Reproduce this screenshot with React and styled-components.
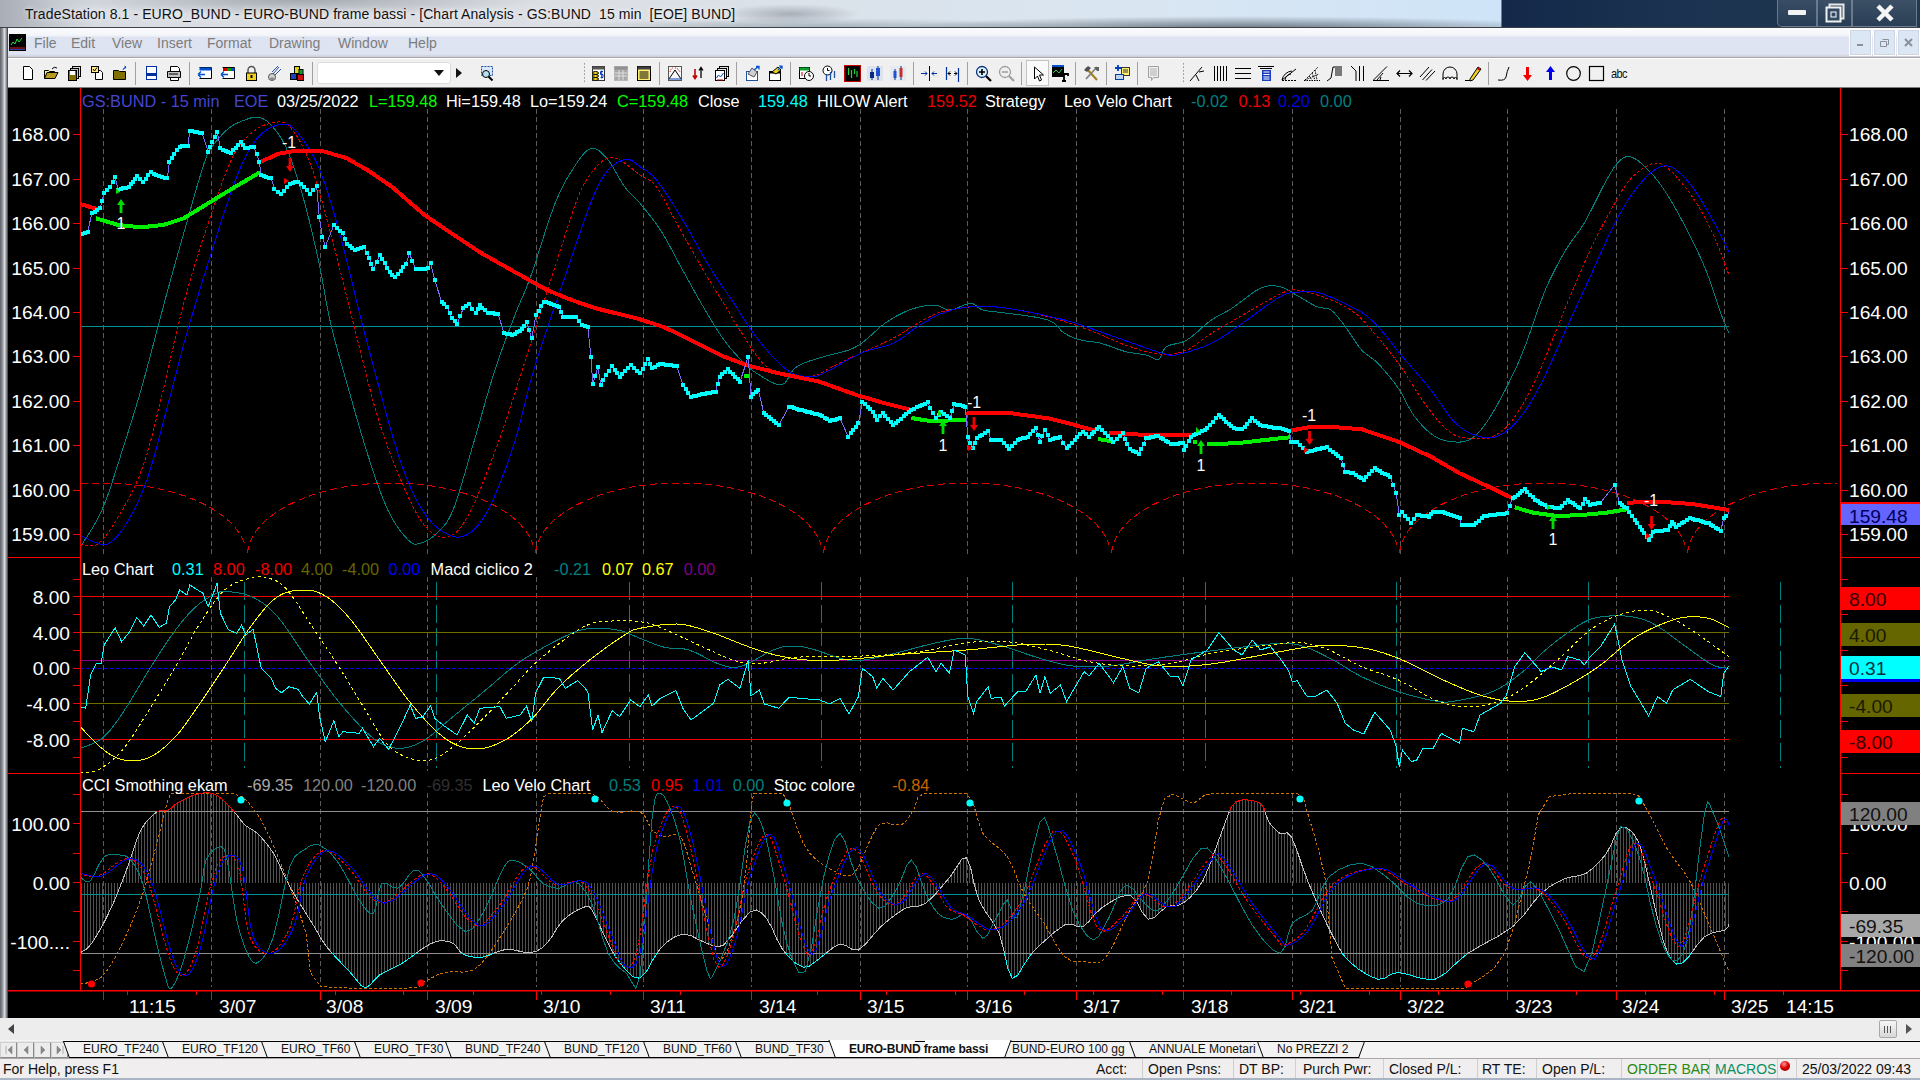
import React from 'react';
import styled, { createGlobalStyle } from 'styled-components';

const Global = createGlobalStyle`
  html, body { margin: 0; padding: 0; width: 1920px; height: 1080px; overflow: hidden; background: #f0f0f0; }
  #root { width: 1920px; height: 1080px; }
  * { box-sizing: border-box; }
`;
const SANS = `"Liberation Sans", Arial, sans-serif`;

/* ---------- window chrome ---------- */
const Screen = styled.div`display:flex;flex-direction:column;width:1920px;height:1080px;font-family:${SANS};`;
const TitleBar = styled.div`
  height:28px;display:flex;align-items:flex-start;padding-left:25px;
  border-bottom:1px solid #3c4248;
  background:
    linear-gradient(90deg,transparent 78.15%,#14294a 78.25%,#1b3350 88%,#22384f 100%),
    radial-gradient(ellipse 360px 14px at 1240px 30px,rgba(60,70,80,.8),transparent),
    radial-gradient(ellipse 260px 10px at 820px 28px,rgba(90,110,120,.45),transparent),
    radial-gradient(ellipse 70px 10px at 790px 14px,rgba(120,125,135,.5),transparent),
    radial-gradient(ellipse 240px 16px at 300px 0px,rgba(110,115,125,.5),transparent),
    linear-gradient(90deg,#a8adb6 0,#d9dde3 5%,#dcdfe4 30%,#d9e6f2 60%,#cfe4f8 78%);
`;
const TitleText = styled.div`
  flex:1;font-size:14px;line-height:29px;color:#111;white-space:pre;letter-spacing:.09px;
  text-shadow:0 0 5px rgba(255,255,255,.9);
`;
const WinControls = styled.div`display:flex;height:27px;margin-right:3px;`;
const WinBtn = styled.div`
  width:${p=>p.$w}px;height:27px;display:flex;align-items:center;justify-content:center;
  border:1px solid rgba(150,165,180,.55);border-top:none;background:linear-gradient(180deg,rgba(255,255,255,.12),rgba(255,255,255,.04));
  &:first-child{border-bottom-left-radius:5px;}
`;
const Middle = styled.div`flex:1;display:flex;min-height:0;height:990px;`;
const LeftFrame = styled.div`width:8px;background:linear-gradient(90deg,#5c6066,#9a9ea4 35%,#dcdfe2 55%,#8c9096 80%,#33363a);`;
const MainCol = styled.div`width:1912px;display:flex;flex-direction:column;`;

const MenuBar = styled.div`
  height:30px;display:flex;align-items:center;position:relative;padding-left:1px;
  background:linear-gradient(180deg,#fbfbfd 0,#f4f5fa 25%,#dee3f1 32%,#dfe4f2 90%,#c9ccd4 100%);
  border-bottom:1px solid #a8a8a8;
`;
const MenuLogo = styled.svg`width:17px;height:17px;margin-right:8px;display:block;`;
const MenuItem = styled.span`width:${p=>p.$w}px;font-size:14px;color:#7c7c7c;`;
const MdiBtns = styled.div`margin-left:auto;display:flex;gap:1px;height:27px;`;
const MdiBtn = styled.div`
  width:${p=>p.$w}px;display:flex;align-items:center;justify-content:center;color:#8a8f98;
  background:#dbe7f5;border:1px solid #fff;outline:1px solid #cfd6e2;outline-offset:-2px;
`;

const ToolBar = styled.div`
  height:30px;display:flex;align-items:center;background:#f0f0f0;border-bottom:1px solid #7d7d7d;border-top:1px solid #fff;
`;
const ToolSection = styled.div`display:flex;align-items:center;height:100%;margin-left:${p=>p.$ml}px;`;
const ToolBtn = styled.div`
  width:23px;height:26px;display:flex;align-items:center;justify-content:center;flex:none;
  ${p=>p.$on&&`background:#fafafa;outline:1px solid #c4c4c4;outline-offset:-1px;`}
`;
const ToolIcon = styled.svg`width:17px;height:17px;display:block;`;
const ToolSep = styled.div`width:8px;height:23px;display:flex;justify-content:center;flex:none;&::after{content:"";width:1px;background:#a0a0a0;}`;
const Grip = styled.div`width:5px;height:22px;flex:none;background:radial-gradient(circle,#999 .8px,transparent 1px) 0 0/5px 3.5px;`;
const Combo = styled.div`
  width:134px;height:22px;background:#fff;border:1px solid #dcdcdc;border-radius:3px;
  display:flex;align-items:center;justify-content:flex-end;padding-right:6px;
`;
const TinyArrow = styled.svg`display:block;flex:none;margin:${p=>p.$m||'0'};`;
const AbcLabel = styled.span`font-size:11px;color:#111;letter-spacing:-.6px;transform:scaleY(1.2);`;

/* ---------- chart ---------- */
const ChartArea = styled.div`width:1912px;height:930px;background:#000;display:flex;flex-direction:column;`;
const Pane = styled.div`position:relative;height:${p=>p.$h}px;flex:none;`;
const PaneSvg = styled.svg`display:block;width:1912px;height:100%;`;
const Legend = styled.div`
  position:absolute;top:${p=>p.$top}px;left:74px;display:flex;height:18px;align-items:center;white-space:pre;font-size:16.3px;
`;
const LegendItem = styled.span`width:${p=>p.$w}px;flex:none;color:${p=>p.$c};`;
const AxisText = styled.text`font-family:${SANS};font-size:19.2px;fill:${p=>p.$c||'#fff'};`;
const MarkText = styled.text`font-family:${SANS};font-size:16px;fill:#fff;text-anchor:middle;`;

/* ---------- bottom ---------- */
const HScroll = styled.div`
  height:22px;background:#ededed;display:flex;align-items:center;justify-content:space-between;padding:0 8px 0 8px;flex:none;
`;
const Thumb = styled.div`
  width:18px;height:18px;margin-left:auto;margin-right:9px;border:1px solid #a8a8a8;border-radius:2px;
  background:linear-gradient(180deg,#f6f6f6,#d8d8d8);display:flex;align-items:center;justify-content:center;gap:1px;
  & i{display:block;width:1px;height:7px;background:#555;margin:0 1px 0 0;}
`;
const TabBar = styled.div`
  height:18px;flex:none;display:flex;background:#f4f4f4;position:relative;padding-top:1px;
  &::before{content:"";position:absolute;left:0;right:0;top:1px;height:1px;background:#000;}
`;
const TabNav = styled.div`width:69px;height:17px;display:flex;flex:none;position:relative;z-index:1;background:#e6e6e6;`;
const TabNavBtn = styled.div`
  width:17px;height:16px;margin-top:1px;border:1px solid #cfcfcf;border-right-color:#8a8a8a;border-bottom-color:#8a8a8a;
  display:flex;align-items:center;justify-content:center;background:#ececec;
`;
const Tab = styled.div`
  position:relative;height:17px;width:${p=>p.$w+6}px;margin-right:-6px;padding-left:14px;flex:none;
  font-size:12px;line-height:17px;white-space:pre;color:#111;z-index:${p=>p.$on?5:1};
  font-weight:${p=>p.$on?700:400};
  ${p=>p.$on&&`letter-spacing:-.2px;margin-top:-1px;height:18px;line-height:19px;`}
  & > span{position:relative;z-index:2;}
  &::before,&::after{
    content:"";position:absolute;top:0;bottom:0;width:50%;z-index:0;background:${p=>p.$on?'#fff':'#f2f2f2'};
    border-top:${p=>p.$on?'0':'1px solid #000'};border-bottom:1px solid #000;transform-origin:bottom;
  }
  &::before{left:0;border-left:1px solid #000;transform:skewX(20deg);}
  &::after{right:0;border-right:1px solid #000;transform:skewX(-20deg);}
`;
const StatusBar = styled.div`
  height:22px;flex:none;display:flex;align-items:center;background:#f0eeee;border-top:1px solid #a8a8a8;border-bottom:2px solid #a9b4c4;
  font-size:14px;color:#111;white-space:pre;
`;
const StatusHelp = styled.div`flex:1;padding-left:3px;`;
const StatusCell = styled.div`
  width:${p=>p.$w}px;flex:none;height:100%;display:flex;align-items:center;padding-left:${p=>p.$pl||5}px;
  border-right:1px solid #cfcfcf;color:${p=>p.$c||'#111'};
  &:last-child{border-right:none;}
`;
const Ball = styled.span`
  display:block;width:10px;height:10px;border-radius:50%;margin:-6px 0 0 -2px;
  background:radial-gradient(circle at 40% 30%,#ff9a9a,#e00000 45%,#700000);
`;

/* ---------- data helpers ---------- */
const joinPanels = (y0, a, b, c) => {
  const out = [];
  [[0,a],[640,b],[1280,c]].forEach(([x0,list]) => list.forEach(([X,Y]) => {
    const x = x0 + X/2.45, y = y0 + Y/3;
    if (out.length && x - out[out.length-1][0] < .6) return;
    out.push([x,y]);
  }));
  return out;
};
const seg = (y0, x0, list) => list.map(([X,Y]) => [x0 + X/2.45, y0 + Y/3]);
const lin = pts => pts.map(p => p[0].toFixed(1)+','+p[1].toFixed(1)).join(' ');
const smooth = (pts, n=5) => {
  const r = [];
  for (let i=0;i<pts.length-1;i++){
    const p0=pts[Math.max(i-1,0)],p1=pts[i],p2=pts[i+1],p3=pts[Math.min(i+2,pts.length-1)];
    for(let k=0;k<n;k++){
      const t=k/n,t2=t*t,t3=t2*t;
      r.push([.5*(2*p1[0]+(p2[0]-p0[0])*t+(2*p0[0]-5*p1[0]+4*p2[0]-p3[0])*t2+(3*p1[0]-p0[0]-3*p2[0]+p3[0])*t3),
              .5*(2*p1[1]+(p2[1]-p0[1])*t+(2*p0[1]-5*p1[1]+4*p2[1]-p3[1])*t2+(3*p1[1]-p0[1]-3*p2[1]+p3[1])*t3)]);
    }
  }
  r.push(pts[pts.length-1]);
  return r;
};
const at = (pts,x) => {
  for(let i=0;i<pts.length-1;i++) if(x>=pts[i][0]&&x<=pts[i+1][0]){
    const d=pts[i+1][0]-pts[i][0]||1; return pts[i][1]+(pts[i+1][1]-pts[i][1])*(x-pts[i][0])/d;
  }
  return null;
};
const blockPath = pts => {
  let d='';
  for(let i=0;i<pts.length-1;i++){
    const [a,b]=[pts[i],pts[i+1]];
    if(Math.abs(b[1]-a[1])>17) { d+=`M${Math.round(a[0])-2} ${Math.round(a[1])-2}h4v4h-4z`; continue; }
    const steps=Math.max(1,Math.round((b[0]-a[0])/2.7));
    for(let k=0;k<steps;k++){
      const t=k/steps,x=a[0]+(b[0]-a[0])*t,y=a[1]+(b[1]-a[1])*t;
      d+=`M${Math.round(x)-2} ${Math.round(y)-2}h4v4h-4z`;
    }
  }
  return d;
};

/* top pane */
const tTeal=smooth(joinPanels(90,
 [[197,1370],[250,1260],[300,1080],[350,880],[400,650],[450,430],[500,220],[520,170],[560,115],[600,90],[630,82],[660,100],[700,170],[740,310],[780,510],[810,700],[850,880],[900,1090],[950,1260],[1000,1350],[1030,1360],[1070,1330],[1110,1260],[1160,1060],[1210,850],[1260,680],[1300,560],[1360,340],[1410,225],[1450,175],[1490,210],[1530,290],[1568,340]],
 [[0,335],[50,420],[100,530],[150,640],[200,740],[240,800],[280,845],[345,885],[375,840],[400,820],[450,800],[530,770],[600,700],[660,660],[720,645],[760,660],[810,640],[840,660],[900,670],[1000,690],[1040,730],[1080,750],[1130,760],[1190,785],[1240,795],[1270,808],[1290,770],[1340,750],[1400,690],[1450,655],[1520,595],[1568,590]],
 [[0,600],[40,615],[90,650],[125,660],[160,710],[200,780],[240,820],[290,895],[330,980],[380,1040],[430,1056],[470,1045],[510,990],[560,880],[600,770],[650,600],[700,480],[745,400],[800,270],[830,215],[855,200],[885,220],[930,280],[980,380],[1040,530],[1080,670],[1100,730]]));
const tRed=smooth(joinPanels(90,
 [[197,1362],[240,1362],[290,1280],[350,1130],[400,900],[450,640],[510,400],[570,200],[620,125],[670,98],[710,110],[760,220],[810,430],[870,720],[930,1000],[1000,1220],[1050,1320],[1100,1340],[1150,1270],[1220,1060],[1290,800],[1360,530],[1420,310],[1470,220],[1510,205],[1568,255]],
 [[0,250],[40,290],[90,400],[150,530],[200,630],[260,750],[310,830],[370,855],[420,860],[480,825],[540,790],[620,745],[680,700],[740,665],[820,650],[900,655],[1000,680],[1100,720],[1200,770],[1280,793],[1340,780],[1400,730],[1470,680],[1568,612]],
 [[0,610],[40,600],[90,615],[160,650],[210,700],[290,820],[360,950],[420,1030],[470,1045],[520,1040],[570,990],[630,860],[690,680],[760,480],[820,340],[860,265],[910,222],[950,235],[1010,320],[1060,430],[1100,555]]));
const tBlue=smooth(joinPanels(90,
 [[197,1335],[240,1360],[270,1358],[310,1300],[360,1170],[410,950],[460,720],[520,480],[580,260],[630,145],[690,102],[730,130],[780,230],[830,420],[900,760],[980,1110],[1040,1270],[1100,1335],[1150,1330],[1200,1250],[1260,1060],[1310,830],[1390,540],[1450,330],[1490,240],[1535,208],[1568,230]],
 [[0,225],[40,270],[100,380],[170,530],[230,640],[290,750],[360,840],[410,860],[450,850],[540,790],[620,760],[680,710],[740,670],[810,650],[900,655],[1040,690],[1150,735],[1280,790],[1320,793],[1400,760],[1470,705],[1568,620]],
 [[0,625],[50,606],[100,610],[190,660],[240,710],[300,800],[370,900],[430,1000],[490,1040],[540,1035],[590,980],[640,880],[700,720],[760,560],[820,400],[870,300],[920,238],[960,232],[1010,290],[1060,390],[1100,485]]));
const thickRed=[
 seg(90,0,[[197,342],[240,358]]),
 [...seg(90,0,[[640,215],[680,192],[720,183],[790,183],[850,205],[900,240],[960,290],[1040,375],[1100,425],[1180,490],[1260,545],[1340,600],[1400,630],[1460,655],[1568,688]]),
  ...seg(90,640,[[60,712],[140,760],[200,797],[260,825],[340,850],[440,875],[530,915],[600,940],[660,958]])],
 seg(90,640,[[800,968],[910,970],[1000,985],[1050,1000],[1115,1022]]),
 seg(90,640,[[1150,1028],[1240,1035],[1355,1035]]),
 seg(90,1280,[[25,1022],[70,1012],[120,1010],[200,1018],[290,1055],[370,1100],[440,1150],[520,1195],[575,1228]]),
 seg(90,1280,[[850,1238],[930,1235],[1010,1242],[1100,1260]]),
];
const thickGreen=[
 seg(90,0,[[235,385],[290,405],[345,412],[400,405],[450,385],[510,340],[570,295],[637,247]]),
 seg(90,640,[[255,858],[268,858]]),
 seg(90,640,[[665,984],[710,993],[800,990]]),
 seg(90,640,[[1122,1047],[1165,1056]]),
 seg(90,640,[[1355,1055],[1365,1055]]),
 [...seg(90,640,[[1390,1062],[1460,1060],[1568,1045]]),...seg(90,1280,[[25,1042]])],
 seg(90,1280,[[575,1252],[620,1268],[680,1278],[740,1275],[800,1268],[850,1258]]),
];
const price=joinPanels(90,
 [[200,432],[215,425],[225,370],[245,355],[255,310],[270,290],[282,262],[290,300],[315,290],[325,275],[335,257],[350,275],[370,247],[390,258],[410,265],[415,215],[440,170],[460,168],[465,122],[495,130],[510,185],[520,155],[532,125],[540,175],[565,190],[590,155],[600,175],[622,170],[635,215],[640,255],[665,265],[672,298],[688,312],[710,282],[730,275],[745,290],[760,312],[776,288],[782,380],[790,440],[797,470],[818,405],[840,430],[850,462],[870,480],[892,470],[905,505],[915,538],[930,495],[955,545],[968,562],[995,522],[1003,490],[1018,538],[1048,535],[1055,518],[1065,570],[1082,635],[1095,650],[1108,685],[1120,703],[1135,655],[1150,642],[1165,670],[1175,645],[1195,668],[1220,672],[1235,730],[1255,735],[1280,718],[1290,695],[1303,745],[1313,675],[1332,635],[1370,650],[1380,680],[1410,680],[1425,705],[1440,712],[1448,800],[1452,882],[1465,832],[1472,885],[1485,855],[1500,828],[1518,860],[1545,825],[1568,850]],
 [[0,840],[20,808],[30,835],[50,822],[90,828],[105,885],[125,920],[185,905],[195,860],[215,838],[245,875],[265,800],[272,920],[290,900],[303,968],[340,1005],[365,950],[410,965],[440,975],[465,992],[490,985],[510,1040],[535,1000],[545,935],[570,965],[580,990],[595,968],[620,1005],[665,960],[705,937],[725,985],[738,965],[760,985],[770,942],[797,950],[803,1040],[815,1075],[825,1045],[853,1022],[860,1050],[885,1050],[905,1078],[925,1050],[950,1040],[970,1015],[980,1055],[992,1020],[1005,1050],[1030,1040],[1045,1075],[1085,1025],[1100,1040],[1125,1010],[1160,1055],[1183,1030],[1200,1078],[1222,1092],[1240,1045],[1270,1038],[1300,1062],[1330,1060],[1332,1080],[1350,1040],[1390,1015],[1418,975],[1455,1015],[1475,1018],[1500,985],[1520,1005],[1560,1015]],
 [[0,1015],[22,1022],[28,1055],[42,1055],[65,1085],[85,1080],[115,1072],[150,1105],[160,1145],[180,1150],[205,1170],[232,1135],[270,1160],[285,1210],[292,1275],[300,1265],[322,1300],[335,1275],[365,1280],[375,1265],[405,1268],[440,1285],[445,1305],[475,1305],[500,1278],[555,1270],[570,1225],[600,1198],[625,1230],[655,1250],[685,1255],[705,1230],[735,1255],[748,1228],[760,1245],[785,1238],[820,1185],[832,1240],[850,1255],[875,1300],[905,1350],[915,1325],[950,1320],[960,1295],[970,1310],[1005,1285],[1050,1300],[1080,1322],[1087,1285],[1100,1268]]);

/* middle pane */
const mCyan=joinPanels(560,
 [[197,440],[210,445],[222,345],[235,312],[248,310],[255,255],[282,203],[298,245],[318,215],[335,172],[352,198],[370,165],[390,202],[408,190],[415,140],[430,120],[440,90],[458,105],[465,75],[497,100],[510,140],[532,70],[540,160],[560,210],[580,220],[592,195],[602,225],[620,208],[640,325],[665,355],[675,385],[690,398],[708,380],[730,388],[742,410],[758,432],[776,397],[783,470],[797,545],[818,482],[830,530],[840,515],[880,520],[888,505],[915,560],[930,535],[952,568],[985,490],[1005,435],[1018,475],[1035,472],[1055,437],[1065,475],[1085,495],[1120,525],[1145,465],[1162,490],[1175,445],[1225,440],[1240,475],[1275,465],[1290,438],[1303,485],[1312,400],[1332,352],[1370,355],[1385,385],[1415,362],[1430,380],[1440,395],[1452,510],[1465,465],[1475,518],[1500,452],[1518,470],[1545,420],[1568,440]],
 [[0,440],[20,405],[30,438],[50,415],[88,392],[105,445],[125,480],[180,430],[195,375],[215,358],[245,385],[265,300],[272,408],[292,390],[305,432],[340,445],[365,412],[440,420],[465,432],[490,415],[512,462],[535,410],[545,325],[570,350],[580,385],[595,355],[620,390],[660,335],[705,292],[725,335],[738,310],[758,340],[770,270],[797,285],[803,410],[817,460],[825,425],[853,380],[860,415],[885,412],[893,438],[925,395],[945,395],[970,345],[980,400],[992,350],[1005,400],[1030,375],[1045,425],[1088,335],[1100,348],[1125,310],[1160,368],[1183,320],[1200,385],[1222,398],[1240,325],[1270,305],[1300,350],[1318,348],[1330,378],[1350,300],[1390,270],[1418,218],[1455,270],[1475,285],[1500,240],[1520,270],[1545,260],[1568,295]],
 [[0,295],[20,330],[30,365],[42,362],[65,408],[85,410],[115,390],[140,430],[160,490],[180,510],[205,522],[232,457],[270,510],[285,560],[292,620],[300,570],[322,605],[335,600],[350,565],[375,565],[395,520],[440,550],[447,505],[475,515],[490,465],[540,430],[555,405],[575,320],[600,278],[640,335],[665,320],[690,330],[705,290],[735,300],[745,315],[760,290],[785,260],[820,192],[838,300],[860,380],[885,430],[903,468],[925,410],[947,430],[962,390],[1005,358],[1050,395],[1080,410],[1087,340],[1100,318]]);
const mTeal=smooth(joinPanels(560,
 [[197,565],[250,535],[300,460],[370,320],[430,210],[480,140],[530,100],[560,95],[620,112],[680,170],[760,310],[840,440],[920,540],[980,565],[1040,540],[1100,480],[1190,390],[1280,300],[1400,220],[1460,205],[1520,212],[1568,235]],
 [[0,238],[60,262],[120,270],[200,315],[250,318],[330,268],[380,258],[430,270],[500,298],[550,300],[640,275],[720,250],[800,235],[880,255],[980,295],[1060,318],[1150,318],[1250,298],[1340,282],[1450,265],[1568,250]],
 [[0,250],[60,260],[130,300],[200,350],[290,395],[380,423],[430,423],[520,395],[590,340],[660,260],[740,190],[790,170],[860,170],[920,195],[1000,265],[1060,315],[1100,325]]));
const mDot=smooth(joinPanels(560,
 [[197,637],[240,630],[300,570],[370,440],[430,320],[490,190],[550,90],[610,55],[650,52],[700,85],[770,210],[830,320],[890,440],[950,555],[1010,597],[1060,598],[1110,560],[1180,480],[1250,390],[1320,300],[1430,200],[1500,183],[1568,185]],
 [[0,190],[40,198],[100,230],[170,270],[240,305],[300,310],[380,292],[480,290],[600,285],[700,272],[800,248],[900,245],[1000,270],[1100,305],[1200,318],[1300,310],[1400,280],[1500,262],[1568,252]],
 [[0,250],[50,247],[120,270],[200,320],[290,360],[380,420],[450,440],[520,430],[590,390],[680,300],[760,210],[830,165],[900,150],[960,175],[1020,220],[1100,290]]));
const mYel=smooth(joinPanels(560,
 [[197,500],[240,555],[280,590],[320,602],[370,590],[430,530],[490,430],[550,320],[620,190],[680,110],[745,90],[800,110],[860,180],[930,300],[1010,435],[1090,535],[1160,567],[1230,545],[1300,480],[1370,380],[1450,295],[1530,225],[1568,205]],
 [[0,203],[90,192],[170,215],[270,262],[350,290],[440,302],[540,295],[650,282],[800,270],[950,253],[1050,258],[1180,295],[1280,318],[1400,312],[1568,275]],
 [[0,268],[100,257],[200,263],[290,295],[400,360],[490,405],[560,423],[630,418],[700,380],[780,320],[860,240],[930,195],[990,172],[1050,175],[1100,203]]));

/* bottom pane */
const cci=smooth(joinPanels(560,
 [[197,1178],[225,1150],[270,1050],[310,930],[345,810],[385,755],[410,752],[440,725],[490,700],[530,705],[570,750],[600,795],[630,820],[670,880],[710,980],[770,1100],[800,1160],[860,1240],[895,1283],[930,1245],[985,1210],[1040,1162],[1075,1143],[1110,1150],[1135,1183],[1180,1192],[1240,1168],[1300,1178],[1340,1150],[1380,1080],[1430,1042],[1450,1050],[1490,1150],[1520,1210],[1568,1255]],
 [[0,1245],[50,1165],[105,1122],[160,1148],[205,1155],[270,1055],[310,1075],[350,1170],[400,1222],[440,1195],[490,1152],[535,1170],[590,1100],[650,1045],[700,1030],[760,950],[800,893],[830,1020],[880,1120],[912,1255],[960,1180],[1040,1095],[1085,1100],[1130,1045],[1200,1005],[1245,1078],[1290,1040],[1330,1030],[1380,960],[1430,800],[1460,725],[1520,730],[1540,785],[1568,820]],
 [[0,820],[28,830],[70,970],[130,1130],[170,1205],[240,1258],[290,1237],[380,1258],[460,1180],[570,1100],[640,1000],[700,955],[750,940],[800,880],[835,803],[880,850],[920,1050],[950,1180],[985,1210],[1040,1130],[1090,1110],[1100,1092]]),3);
const bTeal=smooth(joinPanels(560,
 [[197,950],[220,965],[255,890],[295,885],[320,900],[350,970],[380,1130],[405,1250],[420,1285],[450,1200],[490,1000],[505,900],[535,862],[555,890],[580,1080],[610,1190],[635,1205],[670,1130],[710,920],[745,870],[782,855],[830,910],[880,1020],[915,1060],[935,970],[975,985],[1015,930],[1045,960],[1080,1030],[1140,1115],[1185,1055],[1235,920],[1262,902],[1300,930],[1330,970],[1370,985],[1410,965],[1450,1030],[1490,1180],[1535,1240],[1568,1250]],
 [[0,1050],[30,770],[50,700],[75,750],[100,850],[125,1020],[165,1235],[185,1230],[230,1080],[270,780],[300,800],[325,930],[360,1150],[405,1235],[450,950],[490,820],[530,950],[585,1045],[630,985],[665,900],[700,1000],[730,1060],[765,1078],[800,1065],[840,1135],[870,1080],[900,1020],[925,1070],[980,785],[1010,840],[1060,1050],[1110,1140],[1150,1070],[1190,975],[1240,1035],[1270,1050],[1310,990],[1375,865],[1420,915],[1500,1095],[1568,1180]],
 [[0,1160],[30,1090],[80,1050],[120,950],[200,910],[270,960],[335,1030],[410,1020],[460,890],[510,920],[570,1035],[615,965],[680,1100],[745,1235],[800,980],[835,800],[880,890],[920,1090],[960,1200],[1000,1130],[1040,760],[1060,755],[1100,890]]),3);
const bBlue=smooth(joinPanels(560,
 [[197,940],[250,948],[320,895],[370,960],[420,1180],[455,1247],[490,1170],[530,950],[565,885],[595,930],[620,1130],[670,1180],[720,1100],[750,950],[800,872],[860,920],[940,1030],[1040,945],[1090,970],[1170,1095],[1230,1040],[1300,918],[1370,975],[1440,970],[1500,1130],[1530,1215],[1568,1180]],
 [[0,1165],[40,870],[90,738],[130,850],[190,1200],[230,1160],[270,950],[318,822],[360,950],[420,1185],[470,1000],[530,862],[590,1000],[640,1030],[700,940],[760,1040],[800,1065],[870,1110],[940,1030],[1020,815],[1075,900],[1130,1105],[1190,1070],[1240,1000],[1310,1040],[1400,900],[1430,895],[1500,1030],[1568,1135]],
 [[0,1135],[20,1155],[70,1110],[140,970],[245,925],[320,975],[400,1022],[440,1010],[505,910],[570,985],[640,988],[700,1070],[770,1198],[830,1000],[875,848],[920,960],[985,1160],[1040,950],[1085,785],[1100,795]]),4);
const bRed=bBlue.map(([x,y])=>[Math.max(80,x-3.5),y]);
const stoc=smooth(joinPanels(560,
 [[197,1272],[250,1250],[300,1150],[350,1000],[395,800],[415,710],[440,700],[570,700],[620,745],[660,830],[710,980],[750,1120],[785,1280],[1000,1285],[1040,1265],[1090,1237],[1160,1230],[1210,1160],[1270,1040],[1300,950],[1325,760],[1345,700],[1450,700],[1500,755],[1568,755]],
 [[0,780],[30,810],[60,830],[100,830],[130,940],[170,1100],[200,1200],[250,1020],[275,720],[290,700],[350,700],[400,850],[450,915],[520,945],[560,850],[590,790],[640,795],[670,750],[695,700],[800,700],[840,820],[900,890],[940,1000],[990,1090],[1040,1190],[1090,1205],[1140,1195],[1200,1050],[1245,960],[1285,715],[1355,730],[1400,700],[1568,700]],
 [[0,700],[50,705],[70,770],[110,950],[160,1285],[420,1285],[470,1270],[550,1180],[610,920],[660,710],[850,700],[890,730],[950,870],[1005,965],[1060,1120],[1100,1235]]),3).map(([x,y])=>[x,Math.min(988,Math.max(793.4,y))]);

const hatch=(()=>{let d='';for(let x=81;x<1729;x+=3){const y=at(cci,x);if(y!=null)d+=`M${Math.round(x)+.5} 882.5V${y.toFixed(1)}`;}return d;})();

const GRID=[103,211,319.5,427,535.5,643,751,859.5,967,1075.5,1183,1291.5,1399.5,1507,1615.5,1723.5].map(v=>Math.round(v)+.5);
const TEALV=[244,436,628.5,820.5,1012,1204.5,1396,1588,1780].map(v=>Math.round(v)+.5);
const arcs=(()=>{
  const out=[];
  [103,391,679,967,1255,1543,1831].forEach(c=>{
    let d='';
    for(let x=-143.8;x<=143.8;x+=2){
      const px=c+x; if(px<80||px>1838)continue;
      const u=x/144,y=483+74*(1-Math.sqrt(1-u*u));
      d+=(d?'L':'M')+px.toFixed(1)+' '+y.toFixed(1);
    }
    out.push(d);
  });
  return out;
})();

/* ---------- small drawing parts ---------- */
const Line = ({p,c,w=1,dash}) => <polyline points={lin(p)} fill="none" stroke={c} strokeWidth={w} strokeDasharray={dash} />;
const Arrow = ({x,y,up,c}) => up
  ? <path d={`M${x} ${y}l4 6h-2.6v8h-2.8v-8h-2.6z`} fill={c}/>
  : <path d={`M${x} ${y+14}l-4 -6h2.6v-8h2.8v8h2.6z`} fill={c}/>;
const Tri = ({x,y,c,up}) => <path d={up?`M${x} ${y}l4 4l-4 2z`:`M${x} ${y}l5 3l-5 3z`} fill={c}/>;
const HL = ({y,c,dash}) => <line x1="80" x2="1729" y1={y} y2={y} stroke={c} strokeDasharray={dash} shapeRendering="crispEdges"/>;
const AxisBars = ({top,bottom}) => <g stroke="#f00" shapeRendering="crispEdges">
  <line x1="80.5" x2="80.5" y1={top} y2={bottom}/><line x1="1840.5" x2="1840.5" y1={top} y2={bottom}/>
</g>;
const Ticks = ({ys}) => <path d={ys.map(y=>`M73 ${y}h7M1841 ${y}h7`).join('')} stroke="#f00" shapeRendering="crispEdges"/>;
const Grid = ({top,bottom}) => <path d={GRID.map(x=>`M${x} ${top}V${bottom}`).join('')} stroke="#5a5a5a" strokeDasharray="5 3" shapeRendering="crispEdges"/>;
const Badge = ({y,h=23,bg,c,text,strip}) => <g>
  <rect x="1841" y={y} width="79" height={h} fill={bg}/>
  {strip && <rect x="1841" y={y+h} width="79" height="3" fill={strip}/>}
  <AxisText x="1849" y={y+18.5} $c={c}>{text}</AxisText>
</g>;
const Dot = ({x,y,c}) => <circle cx={x} cy={y} r="3.6" fill={c}/>;

const LEFT_LABELS = (list) => list.map(([t,y]) => <AxisText key={t+'l'} x="70" y={y+7} textAnchor="end">{t}</AxisText>);
const RIGHT_LABELS = (list) => list.map(([t,y]) => <AxisText key={t+'r'} x="1849" y={y+7}>{t}</AxisText>);

const PRICE_LABELS = ['168.00','167.00','166.00','165.00','164.00','163.00','162.00','161.00','160.00','159.00'].map((t,i)=>[t,134.3+i*44.4]);
const MID_LABELS = [['8.00',596.7],['4.00',632.5],['0.00',668.3],['-4.00',703.8],['-8.00',739.6]];
const BOT_LABELS = [['100.00',824],['0.00',882.7],['-100.00',942.3]];

const LEG1=[['GS:BUND - 15 min','#4545d0',152],['EOE','#4545d0',43],['03/25/2022','#fff',92],['L=159.48','#00ff00',77],['Hi=159.48','#fff',84],['Lo=159.24','#fff',87],['C=159.48','#00ff00',81],['Close','#fff',60],['159.48','#00ffff',59],['HILOW Alert','#fff',110],['159.52','#e80000',58],['Strategy','#fff',79],['Leo Velo Chart','#fff',127],['-0.02','#008080',47.5],['0.13','#f00000',39.5],['0.20','#0000e0',42],['0.00','#008080',40]];
const LEG2=[['Leo Chart','#fff',90],['0.31','#00ffff',41],['8.00','#f00000',42],['-8.00','#f00000',46],['4.00','#666600',41],['-4.00','#666600',46.6],['0.00','#0000ff',42],['Macd ciclico 2','#fff',123.4],['-0.21','#008080',48],['0.07','#ffff00',40],['0.67','#ffff00',41.7],['0.00','#800080',40]];
const LEG3=[['CCI Smothing ekam','#fff',165],['-69.35','#a8a8a8',56],['120.00','#808080',58],['-120.00','#808080',65.5],['-69.35','#303030',56],['Leo Velo Chart','#fff',126.6],['0.53','#008080',42],['0.95','#f00000',41],['1.01','#0000e0',40.6],['0.00','#008080',41],['Stoc colore','#fff',118.5],['-0.84','#c86400',50]];

const TIME_LABELS=[['11:15',129],['3/07',219],['3/08',326],['3/09',435],['3/10',543],['3/11',650],['3/14',759],['3/15',867],['3/16',975],['3/17',1083],['3/18',1191],['3/21',1299],['3/22',1407],['3/23',1515],['3/24',1622],['3/25',1731],['14:15',1786]];
const SHORT_TICKS=[127,196,335,403,473,541,610,680,817,886,955,1024,1093,1162,1231,1300,1369,1438,1576,1645,1714,1783];

/* ---------- toolbar icons ---------- */
const S = {fill:'none',stroke:'#000'};
const ICONS = {
  newDoc:<path d="M3.5 1.5h6l3 3v10h-9z" fill="#fff" stroke="#000"/>,
  open:<><path d="M1.5 13.5v-8h4l1 1h5v2" fill="#ffe98a" stroke="#000"/><path d="M1.5 13.5l2.5-6h11l-3 6z" fill="#b79a22" stroke="#000"/><path d="M9 4q2-3 5-1" {...S}/></>,
  saveAll:<><rect x="6.5" y="1.5" width="8" height="10" fill="#d8d8d8" stroke="#000"/><rect x="4.5" y="3.5" width="8" height="10" fill="#c0c0c0" stroke="#000"/><rect x="2.5" y="5.5" width="8" height="10" fill="#807000" stroke="#000"/><rect x="4" y="6" width="5" height="4" fill="#fff"/></>,
  note:<><path d="M6.5 5.5h5l2 2v7h-7z" fill="#fff" stroke="#000"/><rect x="2.5" y="1.5" width="7" height="6" fill="#ffe98a" stroke="#000"/><path d="M4 4l1.5 2L8 2.5" fill="none" stroke="#000"/></>,
  folderUp:<><path d="M1.5 14.5v-9h5l1 1h6v8z" fill="#807000" stroke="#000"/><path d="M11 5q0-2 3-3M12.5 1l1.5 1-1.5 2" fill="none" stroke="#0040c0"/></>,
  preview:<><rect x="3.5" y="1.5" width="10" height="13" fill="#fff" stroke="#0030a0"/><rect x="3.5" y="8" width="10" height="3" fill="#0030a0"/></>,
  printer:<><path d="M4.5 6.5v-5h7l2 2v3" fill="#fff" stroke="#000"/><path d="M1.5 6.5h13v6h-13z" fill="#c0c0c0" stroke="#000"/><path d="M4.5 12.5h8v3h-8z" fill="#fff" stroke="#000"/><path d="M3 9h9" stroke="#000"/></>,
  winBack:<><path d="M2.5 2.5h12v11h-12" fill="#fff" stroke="#000"/><rect x="2.5" y="2.5" width="12" height="3" fill="#0050d0"/><path d="M1 9.5h7M1 9.5l3-3M1 9.5l3 3" fill="none" stroke="#0050d0" strokeWidth="1.3"/></>,
  winBack2:<><path d="M2.5 2.5h12v11h-12" fill="#fff" stroke="#000"/><rect x="3" y="3" width="4" height="3" fill="#d00000"/><rect x="7" y="3" width="4" height="3" fill="#00a000"/><rect x="11" y="3" width="3.5" height="3" fill="#0050d0"/><path d="M1 9.5h7M1 9.5l3-3M1 9.5l3 3" fill="none" stroke="#0050d0" strokeWidth="1.3"/></>,
  lock:<><path d="M5 8V5a3.5 3.5 0 0 1 7 0v3" fill="none" stroke="#555" strokeWidth="1.5"/><rect x="3.5" y="8" width="10" height="7.5" fill="#f0d020" stroke="#000"/><rect x="7.5" y="10" width="2" height="3" fill="#000"/></>,
  sat:<><circle cx="6" cy="12" r="3.5" fill="#d0d0d0" stroke="#555"/><path d="M7 9l6-7M9 10l6-6M6 7l6-6" stroke="#3050a0"/><path d="M2 15l4-3 4 3z" fill="#888"/></>,
  cubes:<><rect x="1.5" y="8.5" width="6" height="6" fill="#1c3fc0" stroke="#000"/><rect x="8.5" y="9.5" width="6" height="6" fill="#d01010" stroke="#000"/><rect x="5.5" y="1.5" width="5" height="7" fill="#d8d820" stroke="#000"/><rect x="10" y="4.5" width="4" height="5" fill="#10a030" stroke="#000"/></>,
  findDoc:<><rect x="3.5" y="1.5" width="11" height="9" fill="#d8e8f8" stroke="#2050a0" strokeDasharray="2 1"/><circle cx="8" cy="9" r="3.5" fill="#b8e0f0" stroke="#000"/><path d="M10.5 11.5l4 4" stroke="#000" strokeWidth="2"/></>,
  dollar:<><rect x="2.5" y="1.5" width="12" height="14" fill="#fff" stroke="#333"/><rect x="2.5" y="1.5" width="12" height="3" fill="#555"/><ellipse cx="5.5" cy="8" rx="3" ry="1.5" fill="#e8d020" stroke="#000"/><ellipse cx="5.5" cy="11" rx="3" ry="1.5" fill="#e8d020" stroke="#000"/><ellipse cx="5.5" cy="14" rx="3" ry="1.5" fill="#e8d020" stroke="#000"/><path d="M13 6.5h-2.5v3h2.5v3h-2.5M11.7 5.5v8" fill="none" stroke="#0040c0"/></>,
  gridGrey:<><rect x="1.5" y="1.5" width="13" height="14" fill="#a8a8a8" stroke="#b8b8b8"/><rect x="1.5" y="1.5" width="13" height="3" fill="#909090"/><path d="M2 8h12M2 11h12M6 5v10M10 5v10" stroke="#e0e0e0"/></>,
  gridYel:<><rect x="1.5" y="1.5" width="13" height="14" fill="#ffef70" stroke="#000"/><rect x="1.5" y="1.5" width="13" height="3" fill="#404040"/><path d="M3.5 7h9M3.5 9h9M3.5 11h9M3.5 13h9" stroke="#000"/></>,
  arcsWin:<><rect x="1.5" y="1.5" width="13" height="14" fill="#f8f8f8" stroke="#555"/><path d="M2 14L8 5l6 9" fill="none" stroke="#000"/><path d="M3 7q1-4 3-4M8 3q3 0 5 4" fill="none" stroke="#d00000" strokeDasharray="1 1"/><path d="M2 14h12" stroke="#0040c0"/></>,
  updown:<><path d="M5 4v9M3 10.5l2 3 2-3" fill="none" stroke="#c00000" strokeWidth="1.6"/><path d="M11 13V3M9 5.5l2-3 2 3" fill="none" stroke="#000" strokeWidth="1.3"/></>,
  stackWin:<><rect x="6.5" y="1.5" width="9" height="10" fill="#e0e0e0" stroke="#000"/><rect x="4.5" y="3.5" width="9" height="10" fill="#e8e8e8" stroke="#000"/><rect x="2.5" y="5.5" width="9" height="10" fill="#fff" stroke="#000"/><path d="M3.5 13l2-3 2 2 3-4" fill="none" stroke="#0040c0"/><path d="M4 15h6" stroke="#c00000"/></>,
  handWin:<><rect x="2.5" y="6.5" width="11" height="9" fill="#fff" stroke="#2050a0"/><path d="M4 9l4-6 5 4-3 5z" fill="#d0d0d0" stroke="#555"/><path d="M10 5l4-3M12 1.5h3v3" fill="none" stroke="#0050d0" strokeWidth="1.3"/></>,
  winUp:<><rect x="2.5" y="6.5" width="11" height="9" fill="#fff" stroke="#000"/><rect x="2.5" y="6.5" width="11" height="2" fill="#000"/><path d="M5 7l6-5 3 3-5 4z" fill="#e8d020" stroke="#000"/><path d="M11 5l4-4M12 1h3v3" fill="none" stroke="#0050d0" strokeWidth="1.2"/></>,
  calClock:<><rect x="1.5" y="2.5" width="10" height="11" fill="#fff" stroke="#000"/><rect x="1.5" y="2.5" width="10" height="3" fill="#10a030"/><path d="M3 8h2M3 10h2" stroke="#c00000"/><circle cx="11" cy="11" r="4.5" fill="#fff" stroke="#000"/><path d="M11 8v3h2" fill="none" stroke="#000"/></>,
  clockBars:<><circle cx="6.5" cy="5.5" r="4.5" fill="#fff" stroke="#000"/><path d="M6.5 3v2.5h2" fill="none" stroke="#000"/><path d="M5.5 9v7M9.5 7v8M13.5 6v7" stroke="#2050a0" strokeWidth="1.3"/></>,
  blackChart:<><rect x="0" y="0" width="17" height="17" fill="#000"/><rect x="0" y="0" width="17" height="17" fill="none" stroke="#c00000" strokeWidth="2"/><path d="M4.5 3v7M7.5 5v8M10.5 4v5M13 6v6" stroke="#20d040" strokeWidth="1.2"/></>,
  candles:<><rect x="0" y="1" width="16" height="15" fill="#dbe3ee"/><path d="M5 4v11M11 1v14" stroke="#0a2a80"/><rect x="3" y="7" width="4" height="6" fill="#0a2a80"/><rect x="9" y="3" width="4" height="8" fill="#1e50d0"/></>,
  candles2:<><rect x="0" y="1" width="16" height="15" fill="#e6e9ef"/><path d="M5 4v11M11 1v14" stroke="#0a2a80"/><rect x="3.5" y="6" width="3" height="7" fill="#1e50d0"/><rect x="9.5" y="3" width="3" height="9" fill="#c03030"/></>,
  inward:<><path d="M8.5 1v15" stroke="#000"/><path d="M0 8.5h6M4 6.5l2 2-2 2M16 8.5h-5M13 6.5l-2 2 2 2" fill="none" stroke="#0030a0"/></>,
  outward:<><path d="M2.5 2v13M14.5 3v14" stroke="#0030a0" strokeWidth="1.2"/><path d="M4 8.5h3M6 6.5l-2 2 2 2M13 8.5h-3M11 6.5l2 2-2 2" fill="none" stroke="#000"/></>,
  zoomIn:<><circle cx="7" cy="7" r="5.5" fill="#d8f0fa" stroke="#103080" strokeWidth="1.3"/><path d="M4 7h6M7 4v6" stroke="#000" strokeWidth="1.6"/><path d="M11 11l5 5" stroke="#000" strokeWidth="2.2"/></>,
  zoomOut:<><circle cx="7" cy="7" r="5.5" fill="#efefef" stroke="#a0a0a0" strokeWidth="1.3"/><path d="M4 7h6" stroke="#a0a0a0" strokeWidth="1.6"/><path d="M11 11l5 5" stroke="#a0a0a0" strokeWidth="2.2"/></>,
  pointer:<path d="M5.5 2v12l3-3 2 5 2-1-2-5h4z" fill="#fff" stroke="#000"/>,
  chartT:<><rect x="0" y="0" width="12" height="12" fill="#000"/><rect x="0" y="0" width="12" height="2" fill="#0050d0"/><path d="M1 8l3-3 3 3 3-4" fill="none" stroke="#20d040"/><path d="M8 9h8v2M12 9v7M10 16h4" fill="none" stroke="#000" strokeWidth="1.8"/></>,
  tools:<><path d="M3 3l11 12" stroke="#a08020" strokeWidth="2.2"/><path d="M1 5l4-4 3 2-4 4z" fill="#505050"/><path d="M14 2L3 14" stroke="#808080" strokeWidth="1.8"/><path d="M11 2h5v4h-2z" fill="#606060"/></>,
  plusDoc:<><rect x="7.5" y="2.5" width="8" height="8" fill="#ffef70" stroke="#333"/><path d="M9 5h5M9 7h5" stroke="#333"/><path d="M4 0v6M1 3h6" stroke="#0040c0" strokeWidth="1.8"/><rect x="1.5" y="9.5" width="8" height="5" fill="#c0d4f0" stroke="#0040a0"/></>,
  chat:<><path d="M3.5 1.5h10v11h-5l-2 3v-3h-3z" fill="#f0f0f0" stroke="#a0a0a0"/><path d="M5 4h7M5 6h7M5 8h7M5 10h7" stroke="#b0b0b0"/></>,
  trend:<path d="M1 16L13 2M7 10l3 6M10 7l5-1" fill="none" stroke="#000"/>,
  vlines:<path d="M2.5 1v15M5.5 1v15M8.5 1v15M11.5 1v15M14.5 1v15" stroke="#000"/>,
  hlines:<path d="M0 3.5h16M0 8.5h16M0 13.5h16" stroke="#000" strokeWidth="1.2"/>,
  calcLines:<><path d="M0 1.5h16M2 3.5h12" stroke="#000"/><rect x="4" y="5" width="9" height="11" fill="#1c3fc0"/><path d="M5.5 7h6M5.5 9.5h6M5.5 12h6M5.5 14h6" stroke="#fff"/></>,
  arcFan:<><path d="M1 15l14-11M1 15a11 11 0 0 1 10-9M4 15a7 7 0 0 1 6-6" fill="none" stroke="#000"/><path d="M1 15.5h14" stroke="#000" strokeDasharray="2 1"/></>,
  fibFan:<path d="M1 15l13-13M1 15l14-6M0 15.5h16M5 11l3 4M8 8l3 7M11 5l2 10" fill="none" stroke="#000" strokeDasharray="1.5 1"/>,
  stepFib:<path d="M0 16l4-3 2-11h9M8 4h7M8 6h7M8 8h7M8 10h7" fill="none" stroke="#000"/>,
  lines3:<path d="M1 1l5 5v10M9.5 1v15M13.5 1v15" fill="none" stroke="#000"/>,
  angle:<path d="M0 15.5h16M0 15.5l14-14M4 15l6-7M7 15l1-3" fill="none" stroke="#000"/>,
  doubleArrow:<path d="M1 8.5h15M4 5.5l-3 3 3 3M13 5.5l3 3-3 3" fill="none" stroke="#000" strokeWidth="1.2"/>,
  parallel:<path d="M1 12L10 2M3.5 15L13 4.5M7 15.5L16 6" fill="none" stroke="#000"/>,
  arches:<path d="M1 15V9a7 7 0 0 1 14 0v6M4 14a2 2 0 0 1 4 0M8 14a2 2 0 0 1 4 0M12 14a1.5 1.5 0 0 1 3 0M1 14a1.5 1.5 0 0 1 3 0" fill="none" stroke="#000"/>,
  pencil:<><path d="M0 15.5h6" stroke="#000"/><path d="M5 14L13 2l3 2-8 11-3 1z" fill="#f0d020" stroke="#000"/><path d="M12 3l3 2" stroke="#d00000" strokeWidth="1.6"/></>,
  curve:<path d="M2 15q7 1 8-3 1-6 3-10" fill="none" stroke="#000"/>,
  redDown:<path d="M7 2h3v8h3l-4.5 6L4 10h3z" fill="#f00000"/>,
  blueUp:<path d="M8.5 1L13 7h-3v8H7V7H4z" fill="#0000f0"/>,
  circle:<circle cx="8.5" cy="8.5" r="6.800" fill="none" stroke="#000" strokeWidth="1.2"/>,
  rect:<rect x="1.5" y="1.5" width="14" height="14" fill="none" stroke="#000" strokeWidth="1.2"/>,
};
const Tool = ({n,on}) => <ToolBtn $on={on}><ToolIcon viewBox="0 0 17 17">{ICONS[n]}</ToolIcon></ToolBtn>;
const renderTools = list => list.map((n,i)=> n==='|' ? <ToolSep key={i}/> : <Tool key={i} n={n} on={n==='pointer'}/>);

/* ---------- panes ---------- */
const PricePane = () => (
  <Pane $h={470}>
    <PaneSvg viewBox="8 88 1912 470" shapeRendering="auto">
      <g shapeRendering="crispEdges">
        <Grid top={109} bottom={555}/>
        {arcs.map((d,i)=><path key={i} d={d} fill="none" stroke="#e00000" strokeDasharray="7 4"/>)}
        <line x1="80" x2="1729" y1="326.5" y2="326.5" stroke="#009090"/>
        <Line p={tTeal} c="#007d7d"/>
        <Line p={tRed} c="#e00000" dash="3 2"/>
        <Line p={tBlue} c="#0000f0"/>
        {thickRed.map((p,i)=><Line key={i} p={p} c="#ff0000" w={4}/>)}
        {thickGreen.map((p,i)=><Line key={i} p={p} c="#00ee00" w={4}/>)}
        <Line p={price} c="#7a6cf0"/>
        <path d={blockPath(price)} fill="#00ffff"/>
      </g>
      <Arrow x={121} y={199} up c="#00e000"/>
      <Tri x={116} y={188} c="#00e000" up/>
      <MarkText x="121" y="229">1</MarkText>
      <Arrow x={290} y={158} c="#f00000"/>
      <Tri x={284} y={178} c="#f00000"/>
      <MarkText x="289" y="148">-1</MarkText>
      <Arrow x={943} y={420} up c="#00e000"/>
      <Tri x={938} y={410} c="#00e000" up/>
      <MarkText x="943" y="451">1</MarkText>
      <MarkText x="974" y="408">-1</MarkText>
      <Arrow x={974} y={417} c="#f00000"/>
      <Tri x={968} y={445} c="#f00000"/>
      <Arrow x={1201} y={440} up c="#00e000"/>
      <Tri x={1196} y={427} c="#00e000" up/>
      <MarkText x="1201" y="471">1</MarkText>
      <MarkText x="1309" y="421">-1</MarkText>
      <Arrow x={1309.5} y={431} c="#f00000"/>
      <Tri x={1304} y={447} c="#f00000"/>
      <Arrow x={1553} y={515} up c="#00e000"/>
      <Tri x={1547} y={504} c="#00e000" up/>
      <MarkText x="1553" y="545">1</MarkText>
      <MarkText x="1651" y="506">-1</MarkText>
      <Arrow x={1651.5} y={516} c="#f00000"/>
      <Tri x={1646} y={533} c="#f00000"/>
      <AxisBars top={88} bottom={558}/>
      <Ticks ys={PRICE_LABELS.map(l=>Math.round(l[1])+.5)}/>
      <path d="M8 557.5h72M1840 557.5h80" stroke="#f00" shapeRendering="crispEdges"/>
      {LEFT_LABELS(PRICE_LABELS)}
      {RIGHT_LABELS(PRICE_LABELS)}
      <rect x="1841" y="502" width="79" height="2" fill="#f00"/>
      <Badge y={504} h={21} bg="#6464ff" c="#00005a" text="159.48"/>
    </PaneSvg>
    <Legend $top={4}>{LEG1.map(([t,c,w],i)=><LegendItem key={i} $c={c} $w={w}>{t}</LegendItem>)}</Legend>
  </Pane>
);

const MacdPane = () => (
  <Pane $h={216}>
    <PaneSvg viewBox="8 558 1912 216">
      <g shapeRendering="crispEdges">
        <Grid top={577} bottom={771}/>
        <path d={TEALV.map(x=>`M${x} 582V768`).join('')} stroke="#008080" strokeDasharray="18 5"/>
        <HL y={596.5} c="#f00000"/>
        <HL y={632.5} c="#6e6e00"/>
        <HL y={660.5} c="#900090"/>
        <HL y={668.5} c="#0000f0" dash="4 2"/>
        <HL y={703.5} c="#6e6e00"/>
        <HL y={739.5} c="#f00000"/>
        <Line p={mTeal} c="#008080"/>
        <Line p={mDot} c="#ffff00" dash="3 3"/>
        <Line p={mYel} c="#ffff00"/>
        <Line p={mCyan} c="#00ffff"/>
      </g>
      <AxisBars top={558} bottom={774}/>
      <Ticks ys={[579,596.5,614,632.5,650,668.5,685,703.5,721,739.5,757]}/>
      <path d="M8 773.5h72M1840 773.5h80" stroke="#f00" shapeRendering="crispEdges"/>
      {LEFT_LABELS(MID_LABELS)}
      <Badge y={587} bg="#ff0000" c="#300000" text="8.00"/>
      <Badge y={623} bg="#666600" c="#1a1a00" text="4.00"/>
      <Badge y={656} bg="#00ffff" c="#003040" text="0.31" strip="#0000f0"/>
      <Badge y={694} bg="#666600" c="#1a1a00" text="-4.00"/>
      <Badge y={730} bg="#ff0000" c="#300000" text="-8.00"/>
    </PaneSvg>
    <Legend $top={2}>{LEG2.map(([t,c,w],i)=><LegendItem key={i} $c={c} $w={w}>{t}</LegendItem>)}</Legend>
  </Pane>
);

const CciPane = () => (
  <Pane $h={216}>
    <PaneSvg viewBox="8 774 1912 216">
      <defs>
        <clipPath id="cciHigh"><rect x="80" y="774" width="1650" height="38"/></clipPath>
        <clipPath id="cciLow"><rect x="80" y="953" width="1650" height="37"/></clipPath>
      </defs>
      <g shapeRendering="crispEdges">
        <Grid top={793} bottom={987}/>
        <path d={hatch} stroke="#505050" fill="none"/>
        <HL y={811.5} c="#909090"/>
        <HL y={894.5} c="#009090"/>
        <HL y={953.5} c="#909090"/>
        <Line p={stoc} c="#d07000" dash="3 2"/>
        <Line p={cci} c="#c0c0c0"/>
        <g clipPath="url(#cciHigh)"><Line p={cci} c="#ff0000"/></g>
        <g clipPath="url(#cciLow)"><Line p={cci} c="#00ffff"/></g>
        <Line p={bTeal} c="#008080"/>
        <Line p={bRed} c="#f00000" dash="3 2"/>
        <Line p={bBlue} c="#0000f0"/>
      </g>
      <Dot x={91.5} y={984} c="#ff0000"/><Dot x={421} y={983} c="#ff0000"/><Dot x={1468} y={984} c="#ff0000"/>
      <Dot x={241} y={800} c="#00ffff"/><Dot x={595} y={799} c="#00ffff"/><Dot x={787} y={803} c="#00ffff"/><Dot x={970} y={803} c="#00ffff"/><Dot x={1300} y={799} c="#00ffff"/><Dot x={1639} y={801} c="#00ffff"/>
      <AxisBars top={774} bottom={990}/>
      <Ticks ys={[794.5,823.5,853.5,882.5,911.5,941.5,970.5]}/>
      {LEFT_LABELS([['100.00',824],['0.00',882.7],['-100....',942.3]])}
      {RIGHT_LABELS(BOT_LABELS)}
      <Badge y={802} bg="#808080" c="#111" text="120.00"/>
      <Badge y={914} bg="#a8a8a8" c="#111" text="-69.35"/>
      <Badge y={944} bg="#808080" c="#111" text="-120.00"/>
    </PaneSvg>
    <Legend $top={2}>{LEG3.map(([t,c,w],i)=><LegendItem key={i} $c={c} $w={w}>{t}</LegendItem>)}</Legend>
  </Pane>
);

const TimePane = () => (
  <Pane $h={28}>
    <PaneSvg viewBox="8 990 1912 28">
      <rect x="8" y="989.5" width="1912" height="2" fill="#f00"/>
      <path d={SHORT_TICKS.map(x=>`M${x+.5} 991v4`).join('')+GRID.map(x=>`M${x} 991v9`).join('')} stroke="#f00" shapeRendering="crispEdges"/>
      {TIME_LABELS.map(([t,x])=><AxisText key={t} x={x} y={1013}>{t}</AxisText>)}
    </PaneSvg>
  </Pane>
);

const TABS=[['EURO_TF240',99],['EURO_TF120',99],['EURO_TF60',93],['EURO_TF30',91],['BUND_TF240',99],['BUND_TF120',99],['BUND_TF60',92],['BUND_TF30',94],['EURO-BUND frame bassi',163,true],['BUND-EURO 100 gg',137],['ANNUALE Monetari',128],['No PREZZI 2',90]];

export default function App(){
  return (
    <Screen>
      <Global/>
      <TitleBar>
        <TitleText>{'TradeStation 8.1 - EURO_BUND - EURO-BUND frame bassi - [Chart Analysis - GS:BUND  15 min  [EOE] BUND]'}</TitleText>
        <WinControls>
          <WinBtn $w={40}><svg width="18" height="6"><rect width="18" height="5" rx="1" fill="#f2f2f2"/></svg></WinBtn>
          <WinBtn $w={35}><svg width="20" height="20"><rect x="4.5" y="1.5" width="14" height="14" fill="none" stroke="#e8e8e8" strokeWidth="2"/><rect x="1.5" y="4.5" width="14" height="14" fill="#334a62" stroke="#f0f0f0" strokeWidth="2"/><rect x="6" y="9" width="5" height="5" fill="none" stroke="#fff"/></svg></WinBtn>
          <WinBtn $w={65}><svg width="18" height="18"><path d="M2 2l14 14M16 2L2 16" stroke="#f6f6f6" strokeWidth="4.5"/></svg></WinBtn>
        </WinControls>
      </TitleBar>
      <Middle>
        <LeftFrame/>
        <MainCol>
          <MenuBar>
            <MenuLogo viewBox="0 0 17 17"><rect width="17" height="17" fill="#000"/><path d="M2 11l2-3 2 2 2-5 2 3 3-4" fill="none" stroke="#20e040"/><path d="M1 14h15" stroke="#d02020"/><path d="M1 15.5h15" stroke="#3040a0"/></MenuLogo>
            <MenuItem $w={37}>File</MenuItem>
            <MenuItem $w={41}>Edit</MenuItem>
            <MenuItem $w={45}>View</MenuItem>
            <MenuItem $w={50}>Insert</MenuItem>
            <MenuItem $w={62}>Format</MenuItem>
            <MenuItem $w={69}>Drawing</MenuItem>
            <MenuItem $w={70}>Window</MenuItem>
            <MenuItem $w={40}>Help</MenuItem>
            <MdiBtns>
              <MdiBtn $w={23}><svg width="9" height="9"><rect x="1" y="6" width="6" height="2" fill="currentColor"/></svg></MdiBtn>
              <MdiBtn $w={23}><svg width="11" height="11"><path d="M3.5 2.5h6v5h-2M1.5 4.5h6v5h-6z" fill="none" stroke="currentColor"/></svg></MdiBtn>
              <MdiBtn $w={23}><svg width="10" height="10"><path d="M1 1l7 7M8 1l-7 7" stroke="currentColor" strokeWidth="2"/></svg></MdiBtn>
            </MdiBtns>
          </MenuBar>
          <ToolBar>
            <ToolSection $ml={8.5}>
              {renderTools(['newDoc','open','saveAll','note','folderUp','|','preview','printer','|','winBack','winBack2','lock','sat','cubes','|'])}
              <Combo><TinyArrow width="10" height="6"><path d="M0 0h10L5 6z" fill="#111"/></TinyArrow></Combo>
              <TinyArrow $m="0 13.5px 0 5px" width="6" height="10" viewBox="0 0 6 10"><path d="M0 0l6 5-6 5z" fill="#111"/></TinyArrow>
              <ToolBtn><ToolIcon viewBox="0 0 17 17">{ICONS.findDoc}</ToolIcon></ToolBtn>
            </ToolSection>
            <ToolSection $ml={83.5}>
              <Grip/>
              {renderTools(['dollar','gridGrey','gridYel','|','arcsWin','updown','stackWin','|','handWin','winUp','|','calClock','clockBars','blackChart','candles','candles2','|','inward','outward','|','zoomIn','zoomOut','|','pointer','chartT','|','tools','|','plusDoc','|','chat'])}
            </ToolSection>
            <ToolSection $ml={16}>
              <Grip/>
              {renderTools(['trend','vlines','hlines','calcLines','arcFan','fibFan','stepFib','lines3','angle','doubleArrow','parallel','arches','pencil','|','curve','redDown','blueUp','circle','rect'])}
              <ToolBtn><AbcLabel>abc</AbcLabel></ToolBtn>
            </ToolSection>
          </ToolBar>
          <ChartArea>
            <PricePane/>
            <MacdPane/>
            <CciPane/>
            <TimePane/>
          </ChartArea>
        </MainCol>
      </Middle>
      <HScroll>
        <TinyArrow width="6" height="10" viewBox="0 0 6 10"><path d="M6 0L0 5l6 5z" fill="#444"/></TinyArrow>
        <Thumb><i/><i/><i/></Thumb>
        <TinyArrow width="6" height="10" viewBox="0 0 6 10"><path d="M0 0l6 5-6 5z" fill="#555"/></TinyArrow>
      </HScroll>
      <TabBar>
        <TabNav>
          {['M8 1v8l-4-4z M2 1v8','M7 1v8L3 5z','M3 1v8l4-4z','M2 1v8l4-4z M8 1v8'].map((d,i)=>(
            <TabNavBtn key={i}><svg width="10" height="10"><path d={d} fill="#888" stroke="#888" strokeWidth=".6"/></svg></TabNavBtn>
          ))}
        </TabNav>
        {TABS.map(([t,w,on])=><Tab key={t} $w={w} $on={on}><span>{t}</span></Tab>)}
      </TabBar>
      <StatusBar>
        <StatusHelp>For Help, press F1</StatusHelp>
        <StatusCell $w={49} $pl={2}>Acct:</StatusCell>
        <StatusCell $w={91}>Open Psns:</StatusCell>
        <StatusCell $w={62}>DT BP:</StatusCell>
        <StatusCell $w={88} $pl={7}>Purch Pwr:</StatusCell>
        <StatusCell $w={94}>Closed P/L:</StatusCell>
        <StatusCell $w={59} $pl={4}>RT TE:</StatusCell>
        <StatusCell $w={85}>Open P/L:</StatusCell>
        <StatusCell $w={88} $c="#2a8a10">ORDER BAR</StatusCell>
        <StatusCell $w={68} $c="#0a9060">MACROS</StatusCell>
        <StatusCell $w={19} $pl={4}><Ball/></StatusCell>
        <StatusCell $w={123}>25/03/2022 09:43</StatusCell>
      </StatusBar>
    </Screen>
  );
}
